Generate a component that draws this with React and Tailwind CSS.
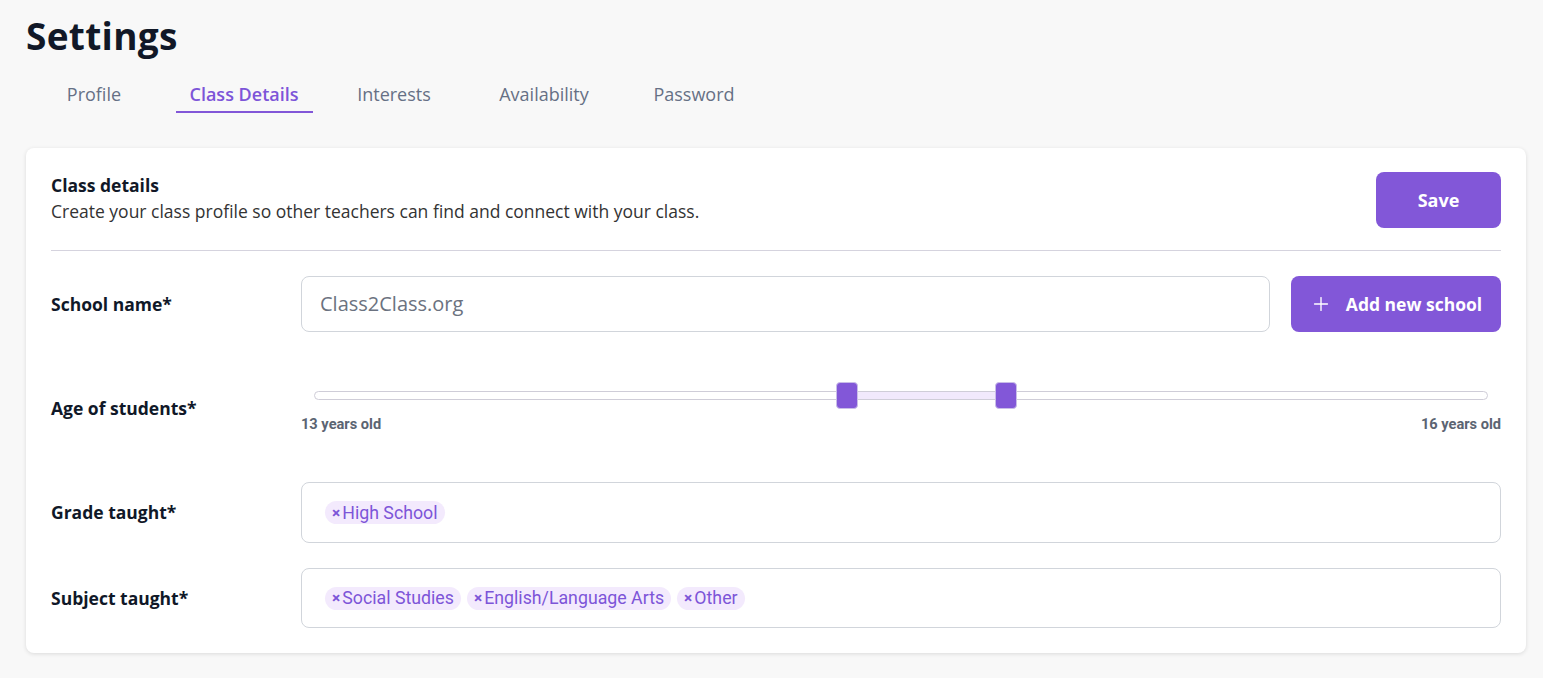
import { Plus } from 'lucide-react'

const tabs = ['Profile', 'Class Details', 'Interests', 'Availability', 'Password']

function Tag({ label }) {
  return (
    <span className="inline-flex items-center h-[23px] px-[7px] pt-[2px] rounded-full bg-[#f3eafd] text-[#7d55d8] text-[17.75px] font-['Roboto',sans-serif] leading-none">
      <span className="text-[15.5px] font-bold mr-[2px]">×</span>
      {label}
    </span>
  )
}

function Row({ label, children, className = '' }) {
  return (
    <div className={`flex items-center ${className}`}>
      <div className="w-[250px] shrink-0 text-[17.5px] font-bold text-[#101828]">{label}</div>
      <div className="flex-1 min-w-0">{children}</div>
    </div>
  )
}

export default function App() {
  const active = 'Class Details'
  const low = 45.4
  const high = 59

  return (
    <div className="min-h-[678px] bg-[#f8f8f8] pl-[26px] pr-[17px] pt-[14px] font-['Open_Sans',sans-serif]">
      <h1 className="text-[37px] font-bold text-[#111827] leading-[44px] tracking-[0.3px]">Settings</h1>

      <div className="flex ml-[-7px] mt-[23px]">
        {tabs.map((t) => (
          <div key={t} className="w-[150px] flex justify-center">
            <span
              className={`px-[14px] pb-[3px] text-[18px] leading-[27px] border-b-2 ${
                t === active
                  ? 'border-[#8257d8] text-[#7d55d8] font-semibold'
                  : 'border-transparent text-[#667085]'
              }`}
            >
              {t}
            </span>
          </div>
        ))}
      </div>

      <div className="mt-[35px] bg-white rounded-[8px] shadow-[0_1px_4px_rgba(0,0,0,0.12)] px-[25px] pt-[24px] pb-[25px]">
        <div className="flex items-start justify-between pb-[22px] border-b border-[#d5d3de]">
          <div className="pt-[1px]">
            <div className="text-[17.5px] font-bold text-[#111827] leading-[24px]">Class details</div>
            <div className="text-[17.5px] text-[#333] leading-[26px] mt-[1px]">
              Create your class profile so other teachers can find and connect with your class.
            </div>
          </div>
          <button className="w-[125px] h-[56px] rounded-[8px] bg-[#8257d8] text-white text-[18px] font-bold">
            Save
          </button>
        </div>

        <Row label="School name*" className="mt-[25px]">
          <div className="flex gap-[21px]">
            <div className="flex-1 h-[56px] rounded-[8px] border border-[#d1d5db] flex items-center px-[18px] text-[20px] text-[#6b7280]">
              Class2Class.org
            </div>
            <button className="w-[210px] h-[56px] rounded-[8px] bg-[#8257d8] text-white text-[17.5px] font-bold flex items-center justify-center gap-[14px]">
              <Plus size={22} strokeWidth={1.5} />
              Add new school
            </button>
          </div>
        </Row>

        <Row label="Age of students*" className="mt-[51px] h-[50px]">
          <div className="px-[13px] pt-[7px]">
            <div className="relative h-[9px] rounded-full border border-[#cfcdd8] bg-white">
              <div className="absolute top-0 bottom-0 left-[45.4%] w-[13.6%] bg-[#f1e9fc]" />
              <div
                className="absolute top-[-10px] w-[22px] h-[27px] -ml-[11px] rounded-[4px] bg-[#8257d8] border border-[#c9bde8]"
                style={{ left: `${low}%` }}
              />
              <div
                className="absolute top-[-10px] w-[22px] h-[27px] -ml-[11px] rounded-[4px] bg-[#8257d8] border border-[#c9bde8]"
                style={{ left: `${high}%` }}
              />
            </div>
          </div>
          <div className="flex justify-between mt-[15px] text-[14.6px] font-bold text-[#5b6472] font-['Roboto',sans-serif] leading-[18px]">
            <span>13 years old</span>
            <span>16 years old</span>
          </div>
        </Row>

        <Row label="Grade taught*" className="mt-[49px]">
          <div className="h-[61px] rounded-[8px] border border-[#d1d5db] flex items-center gap-[6px] px-[23px]">
            <Tag label="High School" />
          </div>
        </Row>

        <Row label="Subject taught*" className="mt-[25px]">
          <div className="h-[60px] rounded-[8px] border border-[#d1d5db] flex items-center gap-[6px] px-[23px]">
            <Tag label="Social Studies" />
            <Tag label="English/Language Arts" />
            <Tag label="Other" />
          </div>
        </Row>
      </div>
    </div>
  )
}
